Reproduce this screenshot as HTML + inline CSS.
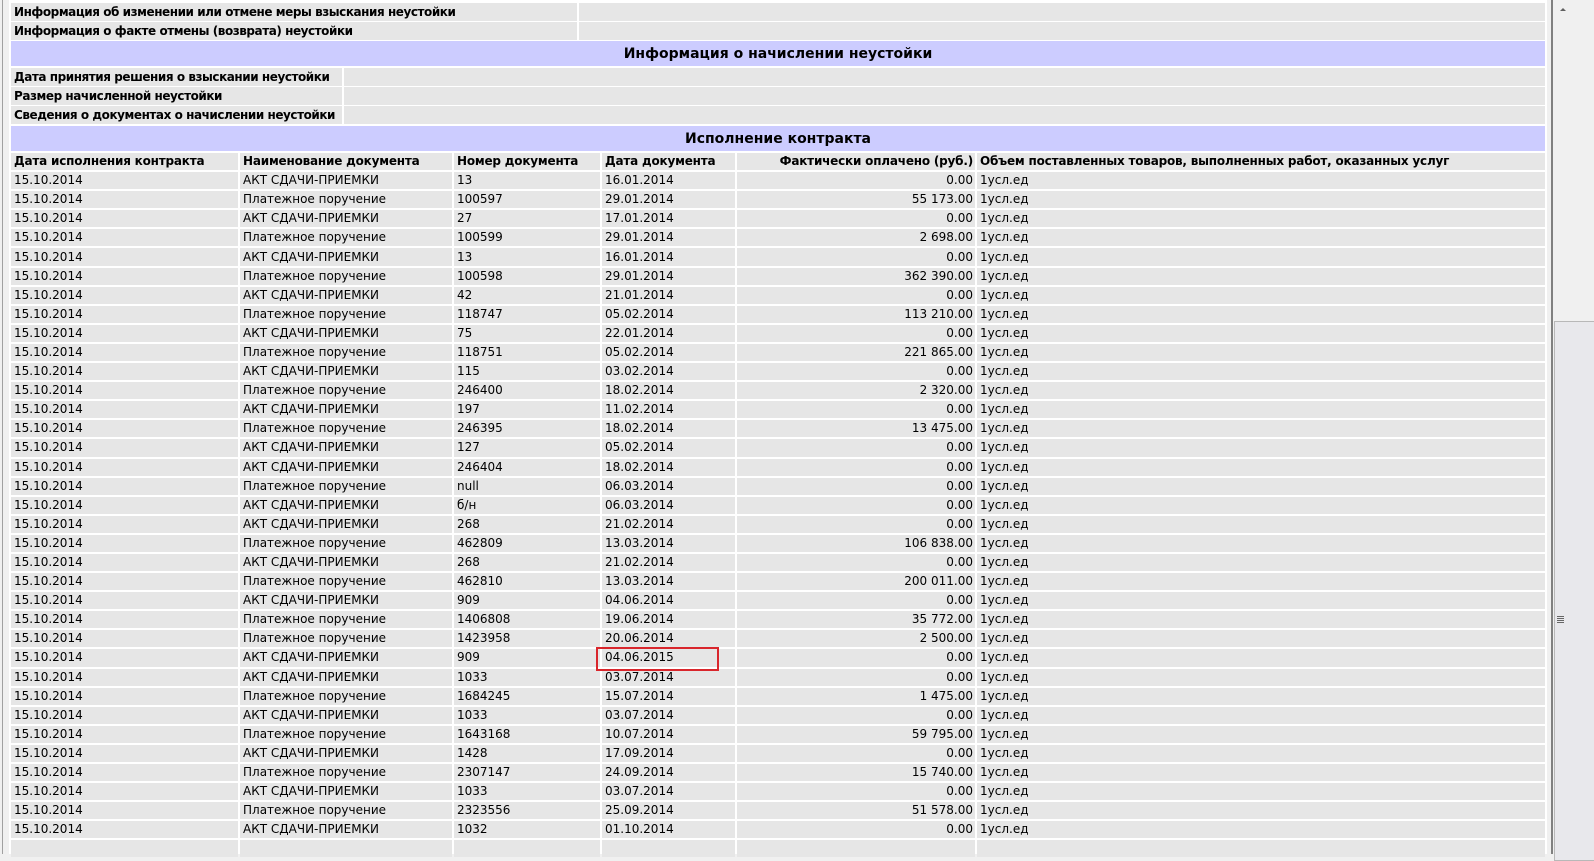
<!DOCTYPE html>
<html><head><meta charset="utf-8">
<style>
html,body{margin:0;padding:0;}
body{width:1594px;height:854px;overflow:hidden;background:#f0f0f0;position:relative;font-family:"DejaVu Sans","Liberation Sans",sans-serif;font-size:12px;color:#000;}
.a{position:absolute;background:#e6e6e6;box-sizing:border-box;padding-left:3px;line-height:18px;height:18px;white-space:nowrap;overflow:hidden;}
.b{font-weight:bold;letter-spacing:-0.45px;}
.p{position:absolute;background:#ccccff;left:11px;width:1534px;text-align:center;font-weight:bold;font-size:14px;}
table{position:absolute;left:9px;top:151px;border-collapse:separate;border-spacing:2px;table-layout:fixed;width:1538px;}
td{background:#e6e6e6;height:17.1px;padding:0 0 0 3px;line-height:17px;white-space:nowrap;overflow:hidden;}
tr.h td{font-weight:bold;letter-spacing:-0.2px;}
td.r{text-align:right;padding:0 2px 0 0;}
</style></head><body>
<div style="position:absolute;left:2px;top:0;width:1px;height:854px;background:#a0a0a0"></div>
<div style="position:absolute;left:9px;top:0;width:1538px;height:854px;background:#fff"></div>
<div class="a b" style="left:11px;top:3px;width:566px">Информация об изменении или отмене меры взыскания неустойки</div>
<div class="a" style="left:579px;top:3px;width:966px"></div>
<div class="a b" style="left:11px;top:22px;width:566px">Информация о факте отмены (возврата) неустойки</div>
<div class="a" style="left:579px;top:22px;width:966px"></div>
<div class="p" style="top:41px;height:25px;line-height:26px">Информация о начислении неустойки</div>
<div class="a b" style="left:11px;top:68px;width:331px">Дата принятия решения о взыскании неустойки</div>
<div class="a" style="left:344px;top:68px;width:1201px"></div>
<div class="a b" style="left:11px;top:87px;width:331px">Размер начисленной неустойки</div>
<div class="a" style="left:344px;top:87px;width:1201px"></div>
<div class="a b" style="left:11px;top:106px;width:331px">Сведения о документах о начислении неустойки</div>
<div class="a" style="left:344px;top:106px;width:1201px"></div>
<div class="p" style="top:126px;height:25px;line-height:26px">Исполнение контракта</div>
<table>
<colgroup><col style="width:227px"><col style="width:212px"><col style="width:146px"><col style="width:133px"><col style="width:238px"><col></colgroup>
<tr class="h"><td>Дата исполнения контракта</td><td>Наименование документа</td><td>Номер документа</td><td>Дата документа</td><td class="r">Фактически оплачено (руб.)</td><td>Объем поставленных товаров, выполненных работ, оказанных услуг</td></tr>
<tr><td>15.10.2014</td><td>АКТ СДАЧИ-ПРИЕМКИ</td><td>13</td><td>16.01.2014</td><td class="r">0.00</td><td>1усл.ед</td></tr>
<tr><td>15.10.2014</td><td>Платежное поручение</td><td>100597</td><td>29.01.2014</td><td class="r">55 173.00</td><td>1усл.ед</td></tr>
<tr><td>15.10.2014</td><td>АКТ СДАЧИ-ПРИЕМКИ</td><td>27</td><td>17.01.2014</td><td class="r">0.00</td><td>1усл.ед</td></tr>
<tr><td>15.10.2014</td><td>Платежное поручение</td><td>100599</td><td>29.01.2014</td><td class="r">2 698.00</td><td>1усл.ед</td></tr>
<tr><td>15.10.2014</td><td>АКТ СДАЧИ-ПРИЕМКИ</td><td>13</td><td>16.01.2014</td><td class="r">0.00</td><td>1усл.ед</td></tr>
<tr><td>15.10.2014</td><td>Платежное поручение</td><td>100598</td><td>29.01.2014</td><td class="r">362 390.00</td><td>1усл.ед</td></tr>
<tr><td>15.10.2014</td><td>АКТ СДАЧИ-ПРИЕМКИ</td><td>42</td><td>21.01.2014</td><td class="r">0.00</td><td>1усл.ед</td></tr>
<tr><td>15.10.2014</td><td>Платежное поручение</td><td>118747</td><td>05.02.2014</td><td class="r">113 210.00</td><td>1усл.ед</td></tr>
<tr><td>15.10.2014</td><td>АКТ СДАЧИ-ПРИЕМКИ</td><td>75</td><td>22.01.2014</td><td class="r">0.00</td><td>1усл.ед</td></tr>
<tr><td>15.10.2014</td><td>Платежное поручение</td><td>118751</td><td>05.02.2014</td><td class="r">221 865.00</td><td>1усл.ед</td></tr>
<tr><td>15.10.2014</td><td>АКТ СДАЧИ-ПРИЕМКИ</td><td>115</td><td>03.02.2014</td><td class="r">0.00</td><td>1усл.ед</td></tr>
<tr><td>15.10.2014</td><td>Платежное поручение</td><td>246400</td><td>18.02.2014</td><td class="r">2 320.00</td><td>1усл.ед</td></tr>
<tr><td>15.10.2014</td><td>АКТ СДАЧИ-ПРИЕМКИ</td><td>197</td><td>11.02.2014</td><td class="r">0.00</td><td>1усл.ед</td></tr>
<tr><td>15.10.2014</td><td>Платежное поручение</td><td>246395</td><td>18.02.2014</td><td class="r">13 475.00</td><td>1усл.ед</td></tr>
<tr><td>15.10.2014</td><td>АКТ СДАЧИ-ПРИЕМКИ</td><td>127</td><td>05.02.2014</td><td class="r">0.00</td><td>1усл.ед</td></tr>
<tr><td>15.10.2014</td><td>АКТ СДАЧИ-ПРИЕМКИ</td><td>246404</td><td>18.02.2014</td><td class="r">0.00</td><td>1усл.ед</td></tr>
<tr><td>15.10.2014</td><td>Платежное поручение</td><td>null</td><td>06.03.2014</td><td class="r">0.00</td><td>1усл.ед</td></tr>
<tr><td>15.10.2014</td><td>АКТ СДАЧИ-ПРИЕМКИ</td><td>б/н</td><td>06.03.2014</td><td class="r">0.00</td><td>1усл.ед</td></tr>
<tr><td>15.10.2014</td><td>АКТ СДАЧИ-ПРИЕМКИ</td><td>268</td><td>21.02.2014</td><td class="r">0.00</td><td>1усл.ед</td></tr>
<tr><td>15.10.2014</td><td>Платежное поручение</td><td>462809</td><td>13.03.2014</td><td class="r">106 838.00</td><td>1усл.ед</td></tr>
<tr><td>15.10.2014</td><td>АКТ СДАЧИ-ПРИЕМКИ</td><td>268</td><td>21.02.2014</td><td class="r">0.00</td><td>1усл.ед</td></tr>
<tr><td>15.10.2014</td><td>Платежное поручение</td><td>462810</td><td>13.03.2014</td><td class="r">200 011.00</td><td>1усл.ед</td></tr>
<tr><td>15.10.2014</td><td>АКТ СДАЧИ-ПРИЕМКИ</td><td>909</td><td>04.06.2014</td><td class="r">0.00</td><td>1усл.ед</td></tr>
<tr><td>15.10.2014</td><td>Платежное поручение</td><td>1406808</td><td>19.06.2014</td><td class="r">35 772.00</td><td>1усл.ед</td></tr>
<tr><td>15.10.2014</td><td>Платежное поручение</td><td>1423958</td><td>20.06.2014</td><td class="r">2 500.00</td><td>1усл.ед</td></tr>
<tr><td>15.10.2014</td><td>АКТ СДАЧИ-ПРИЕМКИ</td><td>909</td><td>04.06.2015</td><td class="r">0.00</td><td>1усл.ед</td></tr>
<tr><td>15.10.2014</td><td>АКТ СДАЧИ-ПРИЕМКИ</td><td>1033</td><td>03.07.2014</td><td class="r">0.00</td><td>1усл.ед</td></tr>
<tr><td>15.10.2014</td><td>Платежное поручение</td><td>1684245</td><td>15.07.2014</td><td class="r">1 475.00</td><td>1усл.ед</td></tr>
<tr><td>15.10.2014</td><td>АКТ СДАЧИ-ПРИЕМКИ</td><td>1033</td><td>03.07.2014</td><td class="r">0.00</td><td>1усл.ед</td></tr>
<tr><td>15.10.2014</td><td>Платежное поручение</td><td>1643168</td><td>10.07.2014</td><td class="r">59 795.00</td><td>1усл.ед</td></tr>
<tr><td>15.10.2014</td><td>АКТ СДАЧИ-ПРИЕМКИ</td><td>1428</td><td>17.09.2014</td><td class="r">0.00</td><td>1усл.ед</td></tr>
<tr><td>15.10.2014</td><td>Платежное поручение</td><td>2307147</td><td>24.09.2014</td><td class="r">15 740.00</td><td>1усл.ед</td></tr>
<tr><td>15.10.2014</td><td>АКТ СДАЧИ-ПРИЕМКИ</td><td>1033</td><td>03.07.2014</td><td class="r">0.00</td><td>1усл.ед</td></tr>
<tr><td>15.10.2014</td><td>Платежное поручение</td><td>2323556</td><td>25.09.2014</td><td class="r">51 578.00</td><td>1усл.ед</td></tr>
<tr><td>15.10.2014</td><td>АКТ СДАЧИ-ПРИЕМКИ</td><td>1032</td><td>01.10.2014</td><td class="r">0.00</td><td>1усл.ед</td></tr>
<tr><td></td><td></td><td></td><td></td><td></td><td></td></tr>
</table>
<div style="position:absolute;left:596px;top:647px;width:119px;height:20px;border:2px solid #d9262c"></div>
<div style="position:absolute;left:1547px;top:0;width:4px;height:854px;background:#f0f0f0"></div>
<div style="position:absolute;left:1551px;top:0;width:2px;height:854px;background:#808080"></div>
<div style="position:absolute;left:1553px;top:0;width:41px;height:854px;background:#f0f0f0"></div>
<div style="position:absolute;left:1560px;top:8px;width:0;height:0;border-left:3px solid transparent;border-right:3px solid transparent;border-bottom:3px solid #606060"></div>
<div style="position:absolute;left:1554px;top:321px;width:40px;height:540px;background:#e8e8ec;border:1px solid #b8b8b8;border-right:none;box-sizing:border-box"></div>
<div style="position:absolute;left:1557px;top:616px;width:7px;height:7px;background:repeating-linear-gradient(#666 0 1px,transparent 1px 2px)"></div>
</body></html>
